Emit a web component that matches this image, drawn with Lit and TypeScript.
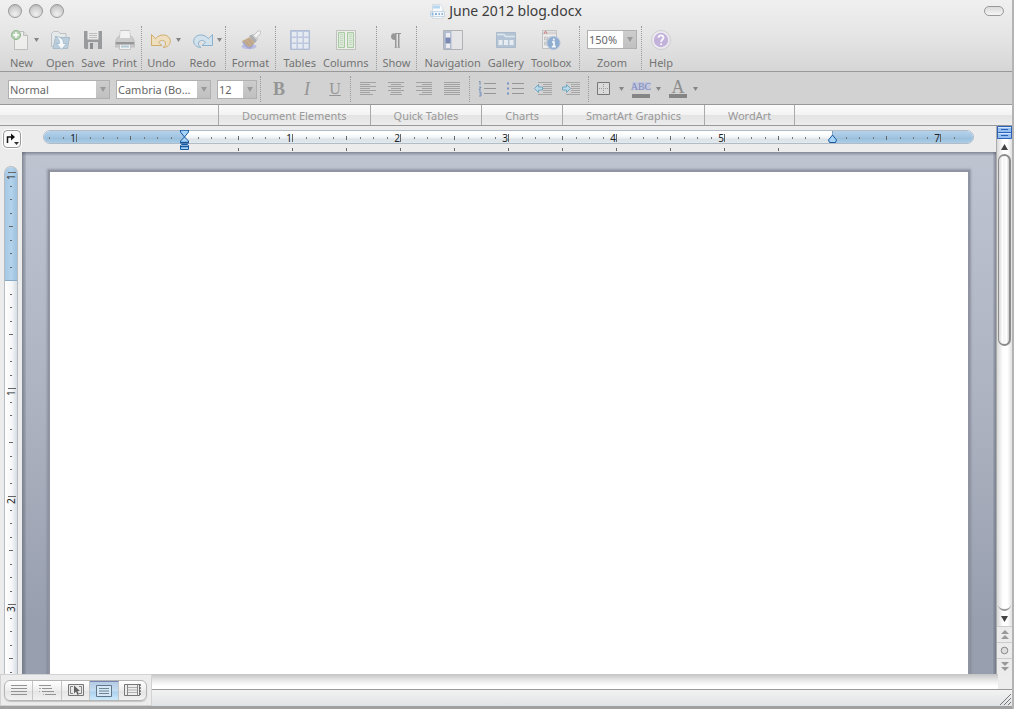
import { LitElement, html, svg, css } from "lit";
import { customElement, property } from "lit/decorators.js";

const INCH = 108;

const icons: Record<string, any> = {
  New: svg`<path d="M3.500 1.500h9l4 4v14h-13z" fill="#f1f2ef" stroke="#b4b7b2"/><path d="M12.500 1.500v4h4" fill="#ddd" stroke="#b4b7b2"/>
    <circle cx="5" cy="5" r="4.600" fill="#a9cda6" stroke="#7fae7e"/><path d="M5 2.300v5.400M2.300 5h5.400" stroke="#fff" stroke-width="1.800"/>`,
  Open: svg`<path d="M1.500 3.500l2-2h5l1.500 2h6v13h-14.500z" fill="#e6eaec" stroke="#b3bac0"/><path d="M3 18.500l2.500-11h14l-2 11z" fill="#b0c9dc" stroke="#9db3c3"/>
    <path d="M5 6.500c5 0 8.500 2 8.500 7h3l-5 6-5-6h3c0-3-1-6-4.500-7z" fill="#fbfdfe" stroke="#8fafc6" stroke-width=".8"/>`,
  Save: svg`<path d="M1 1h18v18h-17l-1-1z" fill="#87898b"/><path d="M4.500 1h11v8.500h-11z" fill="#ececec"/><path d="M6 3.500h8M6 5.500h8M6 7.500h8" stroke="#b5b5b5"/><path d="M5 12h10v7h-10z" fill="#d5d5d5"/><path d="M7 13h3v6h-3z" fill="#77797b"/>`,
  Print: svg`<path d="M5.500 .5h9l1 9h-11z" fill="#f4f4f4" stroke="#bbb"/><path d="M2 8l2-2h12l2 2 1.500 4v5h-19v-5z" fill="#c7c7c7" stroke="#aaa" stroke-width=".7"/><path d="M5.500 1h9l.5 7h-10z" fill="#f6f6f6"/><path d="M1 12h18v2.500h-18z" fill="#858585"/><path d="M4.500 14.500h11v5h-11z" fill="#f6f6f6" stroke="#aaa" stroke-width=".7"/><path d="M6 15.500h8v2h-8z" fill="#a5c4d2"/>`,
  Undo: svg`<path d="M.5 4.500v11h10.500l-3.500-3.200c2-2.700 6.500-2.500 7 .7.300 2-.8 3.500-2.500 4.500 4.500-.2 7.500-3 7.300-6.700C18.900 4.500 9.500 2.500 4.500 8.800z" fill="#f0dfb8" stroke="#cda04e"/>`,
  Redo: svg`<path d="M19.500 4.500v11h-10.500l3.500-3.200c-2-2.700-6.500-2.500-7 .7-.3 2 .8 3.500 2.500 4.500C3.500 17.300.5 14.500.7 10.800 1.100 4.500 10.500 2.500 15.500 8.800z" fill="#cfe2f0" stroke="#74a5c8"/>`,
  Format: svg`<ellipse cx="8" cy="16.500" rx="7.500" ry="2.800" fill="#b4b7e0"/><path d="M1 11l8-4 5 5.500-5 5.500c-3 0-6-3-8-7z" fill="#bea07a"/><path d="M2 12c2 4 4 5.500 7 6l3-2.500" stroke="#8f96d0" stroke-width="1.500" fill="none"/><path d="M4 10.500l5 6M7 9l5 6" stroke="#a08a70" stroke-width=".7"/><path d="M8 6l2.500-1.500 5.500 6-2 2.500z" fill="#a0a2a8"/><path d="M11 4.500l2 .5L17 1c2-1 3.500.8 2.500 2.500L16 7.500l.3 2z" fill="#f4f4f4" stroke="#aaa" stroke-width=".8"/>`,
  Tables: svg`<path d="M.5.500h19v19h-19z" fill="#b4c2de" stroke="#a4b4d2"/><path d="M2 2h4.500v4.500h-4.500zM8 2h4.500v4.500h-4.500zM14 2h4.500v4.500h-4.500zM2 8h4.500v4.500h-4.500zM8 8h4.500v4.500h-4.500zM14 8h4.500v4.500h-4.500zM2 14h4.500v4.500h-4.500zM8 14h4.500v4.500h-4.500zM14 14h4.500v4.500h-4.500z" fill="#e6ebf4"/>`,
  Columns: svg`<path d="M.5.500h19v19h-19z" fill="#eef1ec" stroke="#b5bab3"/><path d="M2.500 2.500h6v15h-6zM11.500 2.500h6v15h-6z" fill="#dcebd8" stroke="#9cc496"/><path d="M5.500 4v12M14.500 4v12" stroke="#bdd7b8" stroke-dasharray="1 1" stroke-width="3"/>`,
  Show: svg`<path d="M9 3c-2.800 0-4 1.600-4 3.500s1.200 3.500 4 3.500zM9 3h1.500v14.500h-1.500zM12 3h1.500v14.500h-1.500zM8.500 3h6.500v1h-6.500zM8.500 17h2.500v.8h-2.500zM11.500 17h2.500v.8h-2.500z" fill="#858585"/>`,
  Navigation: svg`<path d="M.5.500h19v19h-19z" fill="#e6e6e8" stroke="#a4a6ab"/><path d="M1 1h7.500v18h-7.500z" fill="#a9b3cf"/><path d="M3 3h4v4h-4zM3 14h4v4h-4z" fill="#eef0f6"/><path d="M2.500 8h5v5h-5z" fill="#6373a4"/>`,
  Gallery: svg`<path d="M.5 2.500h19v15h-19z" fill="#a8bdd3" stroke="#9db1c5"/><path d="M1 4.500h7l1.500 2h9.500" stroke="#dce6ef" fill="none" stroke-width="1.500"/><path d="M2.500 10h4v5h-4zM8 10h4v5h-4zM13.500 10h4v5h-4z" fill="#e8eff5"/>`,
  Toolbox: svg`<path d="M1.500 .5h14v18h-14z" fill="#f0f0f0" stroke="#b9b9b9"/><path d="M2 1.500h13v3h-13z" fill="#d5d0d0"/><path d="M3 4l1.500-3L6 4" stroke="#c66" fill="none"/><path d="M3.500 7h3v3h-3zM8 7h3v3h-3zM3.500 12h3v3h-3zM12 7h2v3h-2z" fill="#d5d5d5" stroke="#aaa" stroke-width=".6"/><circle cx="12.500" cy="13" r="6.500" fill="#7ba1ce" stroke="#a7bcd5"/><path d="M12.800 8.500v2M11 12h2v4.500M10.800 16.700h4" stroke="#fff" stroke-width="1.700" fill="none"/>`,
  Help: svg`<circle cx="10" cy="10" r="9.500" fill="#f0edf3" stroke="#c9c6cc"/><circle cx="10" cy="10" r="7.200" fill="#bba6d9"/><path d="M7.500 7.800c.2-3.400 5.300-3.200 5 .1-.2 1.700-2.300 1.700-2.400 4M10.100 13.200v1.800" fill="none" stroke="#fff" stroke-width="1.800"/>`,
};

const rows = (spans: number[][]) =>
  spans.map(([a, b], i) => svg`<path d="M${a} ${2.5 + i * 2}H${b}" stroke="#a2a2a2"/>`);
const listRows = [3.5, 8.5, 13.5].map((y) => svg`<path d="M6 ${y}h12" stroke="#959595"/>`);
const indentRows = svg`<path d="M4 2.500h14M9 4.500h9M9 6.500h9M9 8.500h9M9 10.500h9M9 12.500h9M4 14.500h14" stroke="#a6a6a6"/>`;

const formatIcons: Record<string, any> = {
  "Align left": rows([[1, 17], [1, 11], [1, 17], [1, 11], [1, 17], [1, 11], [1, 14]]),
  "Align center": rows([[1, 17], [4, 14], [1, 17], [4, 14], [1, 17], [4, 14], [3, 15]]),
  "Align right": rows([[1, 17], [7, 17], [1, 17], [7, 17], [1, 17], [7, 17], [4, 17]]),
  Justify: rows([[1, 17], [1, 17], [1, 17], [1, 17], [1, 17], [1, 17], [1, 17]]),
  "Numbered list": svg`${listRows}<path d="M1 2l1-1v4M1 7h2l-2 3h2M1 12h2v4h-2M1.500 14h1" stroke="#6688b8" fill="none" stroke-width=".9"/>`,
  "Bulleted list": svg`${listRows}<path d="M1 2.500h2v2h-2zM1 7.500h2v2h-2zM1 12.500h2v2h-2z" fill="#7795c4"/>`,
  "Decrease indent": svg`${indentRows}<path d="M.5 8.500l4-4v2.500h4v3h-4v2.500z" fill="#b9dbea" stroke="#6ba3be" stroke-width=".9"/>`,
  "Increase indent": svg`${indentRows}<path d="M8.500 8.500l-4-4v2.500h-4v3h4v2.500z" fill="#b9dbea" stroke="#6ba3be" stroke-width=".9"/>`,
  Borders: svg`<path d="M2.500 2.500h12v12h-12z" fill="#dadada" stroke="#777"/><path d="M8.500 4v10M4 8.500h10" stroke="#999" stroke-dasharray="1 1"/>`,
};

const viewIcons: Record<string, any> = {
  "Draft view": svg`<path d="M1 2.500h16M1 5.500h16M1 8.500h16M1 11.500h16" stroke="#929292"/>`,
  "Outline view": svg`<path d="M1 2.500h12M4 5.500h10M4 8.500h12M7 11.500h11" stroke="#929292"/><path d="M1 5.500h2M1 8.500h1M5 11.500h1" stroke="#aaa"/>`,
  "Publishing view": svg`<path d="M1.500 1.500h15v11h-15z" fill="#e8e8e8" stroke="#777"/><path d="M6 3.500h-2.500v7h2.500M12 3.500h2.500v7h-2.500" fill="none" stroke="#888"/><path d="M7 2.500v8l2-2 1.500 3.500 1.500-.7-1.500-3.300h2.500z" fill="#606060"/>`,
  "Print layout view": svg`<path d="M1.500 1.500h15v11h-15z" fill="#d6e8f5" stroke="#60778a"/><path d="M4 4.500h10M4 7h10M4 9.500h10" stroke="#6b8496"/>`,
  "Notebook view": svg`<path d="M1.500 1.500h15v11h-15z" fill="#eee" stroke="#777"/><path d="M4.500 2v10M14.500 2v10" stroke="#888"/><path d="M5 4.500h9M5 7h9M5 9.500h9" stroke="#b0b0b0"/><path d="M17 1v12" stroke="#666" stroke-width="1.500" stroke-dasharray="2 1"/>`,
};

type Item = { label: string; menu?: boolean };
const groups: Item[][] = [
  [{ label: "New", menu: true }, { label: "Open" }, { label: "Save" }, { label: "Print" }],
  [{ label: "Undo", menu: true }, { label: "Redo", menu: true }],
  [{ label: "Format" }],
  [{ label: "Tables" }, { label: "Columns" }],
  [{ label: "Show" }],
  [{ label: "Navigation" }, { label: "Gallery" }, { label: "Toolbox" }],
];

@customElement("combo-box")
export class ComboBox extends LitElement {
  @property() label = "";
  @property() value = "";
  static styles = css`
    :host { display: flex; position: relative; height: 19px; }
    select {
      flex: 1; min-width: 0; height: 19px; padding: 0 14px 0 1px; margin: 0;
      appearance: none; border: 1px solid #b0b0b0; border-radius: 0;
      background: linear-gradient(#cdcdcd, #c0c0c0) right / 13px 100% no-repeat, #fff;
      color: #666; font: 11px "Noto Sans", "Open Sans", sans-serif; text-overflow: clip;
    }
    .arrow { position: absolute; right: 4px; top: 7px; pointer-events: none; }
  `;
  render() {
    return html`<select aria-label=${this.label}><option>${this.value}</option></select>
      <svg class="arrow" width="6" height="5" aria-hidden="true"><path d="M0 0h6l-3 5z" fill="#9a9a9a" /></svg>`;
  }
}

@customElement("page-ruler")
export class PageRuler extends LitElement {
  @property({ type: Boolean, reflect: true }) vertical = false;
  static styles = css`
    :host { display: block; }
    svg { display: block; overflow: hidden; }
    text { font: 10px "Noto Sans", "Open Sans", sans-serif; fill: #222; }
    .track {
      display: flex; height: 14px; box-sizing: border-box; overflow: hidden;
      border: 1px solid #b2bcc6; border-radius: 7px;
      background: linear-gradient(#fff 20%, #f3f6f8 50%, #dbe3e8 70%, #e3eaee);
    }
    .margin { flex: none; width: 140px; background: linear-gradient(#b5d1ea, #a2c6e3 50%, #9abfdc 60%, #abcde8); }
    .text { flex: none; width: 648px; }
    .rest { flex: 1; width: auto; border-left: 1px solid #7f9fbd; }
    .overlay { position: relative; height: 24px; }
    .marks { position: absolute; inset: 0; width: 100%; height: 24px; }
    .v {
      position: relative; box-sizing: border-box; width: 14px; height: 100%; overflow: hidden;
      border: 1px solid #b6bcc1; border-bottom: 0; border-radius: 7px 7px 0 0;
      background: linear-gradient(90deg, #fff, #f4f5f7 60%, #d5dee4);
    }
    .vmargin { height: 113px; border-bottom: 1px solid #8aa9c5; background: linear-gradient(90deg, #a4c7e4, #b4d3ec 50%, #9cc1de); }
    .vmarks { position: absolute; inset: 0; width: 100%; height: 100%; }
  `;
  render() {
    return this.vertical ? this.renderVertical() : this.renderHorizontal();
  }
  private renderHorizontal() {
    const zero = 141;
    const marks = [];
    for (let i = -10; i < 58; i++) {
      const x = Math.round(zero + (i * INCH) / 8);
      const inch = i % 8 === 0;
      const half = i % 4 === 0;
      if (i !== 0 && i !== 48) {
        marks.push(inch
          ? svg`<path d="M${x + 0.5} 4v8" stroke="#666"/><text x=${x} y="12" text-anchor="end">${Math.abs(i / 8)}</text>`
          : half
            ? svg`<path d="M${x + 0.5} 6v4" stroke="#666"/>`
            : svg`<path d="M${x + 0.5} 7v2" stroke="#777"/>`);
      }
      if (half && i > 0 && i < 48) marks.push(svg`<path d="M${x + 0.5} 18v3" stroke="#666"/>`);
    }
    return html`<div class="overlay">
      <div class="track"><div class="margin"></div><div class="text"></div><div class="margin rest"></div></div>
      <svg class="marks" aria-hidden="true">
        ${marks}
        <g stroke="#17589e" fill="#a6d3f7">
          <path d="M137.500 -.5h8v2.500l-4 5-4-5z" /><path d="M141.500 7l4 4v2h-8v-2z" /><path d="M138.500 14.500h6l1 1v4h-8v-4z" />
          <path d="M789.500 5l4 5-1 2.500h-6l-1-2.500z" />
        </g>
        <path d="M137 0h9M137 12.500h9M137 16.500h9" stroke="#17589e" stroke-width="1.500" />
      </svg>
    </div>`;
  }
  private renderVertical() {
    const zero = 114;
    const marks = [];
    for (let i = -8; i < 30; i++) {
      const y = Math.round(zero + (i * INCH) / 8);
      if (i === 0) continue;
      marks.push(i % 8 === 0
        ? svg`<path d="M3 ${y - 0.5}h8" stroke="#666"/><text transform="translate(10 ${y + 7}) rotate(-90)">${Math.abs(i / 8)}</text>`
        : i % 4 === 0
          ? svg`<path d="M4 ${y - 0.5}h4" stroke="#666"/>`
          : svg`<path d="M5 ${y - 0.5}h2" stroke="#666"/>`);
    }
    return html`<div class="v"><div class="vmargin"></div><svg class="vmarks" aria-hidden="true">${marks}</svg></div>`;
  }
}

@customElement("app-root")
export class AppRoot extends LitElement {
  static styles = css`
    :host {
      display: flex; height: 100vh; overflow: hidden; box-sizing: border-box; padding-right: 2px;
      background: #b4b4b4; font: 11px "Noto Sans", "Open Sans", sans-serif; color: #737373;
    }
    * { box-sizing: border-box; }
    button { padding: 0; margin: 0; border: 0; background: none; font: inherit; color: inherit; }
    svg { display: block; }
    .window { flex: 1; min-width: 0; display: flex; flex-direction: column; background: #ececec; }
    .head { height: 72px; flex: none; background: linear-gradient(#f0f0f0, #e5e5e5 50%, #d6d6d6); border-bottom: 1px solid #989898; }
    .title { display: grid; grid-template-columns: 1fr auto 1fr; align-items: center; height: 22px; padding: 0 8px; }
    .lights { display: flex; gap: 7px; }
    .light { width: 14px; height: 14px; border-radius: 50%; border: 1px solid #999; background: radial-gradient(circle at 50% 75%, #f0f0f0, #cfcfcf 60%, #a8a8a8); }
    .name { display: flex; align-items: center; gap: 4px; margin: 0; font-size: 14px; line-height: 20px; font-weight: 400; color: #3c3c3c; }
    .pill { justify-self: end; width: 20px; height: 10px; border: 1px solid #999; border-radius: 5px; background: linear-gradient(#dadada, #f5f5f5); }
    .tools { display: grid; grid-template-columns: 142px 84px 50px 101px 40px 163px 62px 38px; height: 48px; padding-top: 4px; }
    .group { display: flex; justify-content: center; gap: 7px; height: 44px; border-right: 1px dotted #999; }
    .group:first-child { padding-left: 6px; }
    .group:nth-child(2) { padding-left: 2px; gap: 8px; }
    .group:last-child { border-right: 0; }
    .tool { display: flex; flex-direction: column; align-items: center; gap: 5px; line-height: 16px; padding-top: 4px; }
    .tool svg { opacity: .8; }
    .entry { display: flex; gap: 1px; align-items: flex-start; }
    .menu { padding-top: 12px; }
    .caret { width: 5px; flex: none; }
    .zoom { display: flex; flex-direction: column; align-items: center; gap: 6px; padding: 4px 0 0 3px; line-height: 16px; }
    .zoombox { width: 50px; }
    .format { display: flex; align-items: center; flex: none; height: 33px; padding: 2px 0 0 8px; background: #d2d2d2; border-bottom: 1px solid #989898; }
    .boxes { display: flex; gap: 6px; }
    .style { width: 102px; } .font { width: 95px; } .size { width: 40px; }
    .set { display: flex; align-items: center; gap: 10px; height: 26px; padding: 0 8px; border-left: 1px dotted #999; }
    .set.first { margin-left: 3px; padding-right: 5px; gap: 8px; }
    .glyph { width: 20px; font: 18px/20px "Liberation Serif", serif; color: #959595; }
    .b { font-weight: 700; } .i { font-style: italic; } .u { font-size: 16px; text-decoration: underline; }
    .menuicon { display: flex; align-items: center; gap: 6px; }
    .ink { display: flex; flex-direction: column; align-items: center; width: 18px; height: 18px; font: 18px/14px "Liberation Serif", serif; color: #8d8d8d; border-bottom: 4px solid #858585; }
    .ink.abc { font: 10px/13px "Liberation Serif", serif; color: #7d88be; background: linear-gradient(transparent 15%, #c3c7dd 15% 75%, transparent 75%); }
    .set.last { padding-left: 6px; gap: 8px; }
    .tabs { display: flex; flex: none; height: 21px; padding-left: 218px; background: linear-gradient(#fbfbfb, #f3f3f3 48%, #e4e4e4 52%, #ececec); border-bottom: 1px solid #999; }
    .tab { padding: 0 23px; border-right: 1px solid #aaa; color: #999; line-height: 22px; }
    .tab:first-child { border-left: 1px solid #aaa; }
    .work { flex: 1; min-height: 0; display: grid; grid-template-columns: 22px 1fr 16px; grid-template-rows: 26px 1fr; }
    .corner { padding: 4px 0 0 3px; }
    .tabstop { display: block; width: 18px; height: 18px; border: 1px solid #999; border-radius: 4px; background: #fafafa; box-shadow: 0 0 0 1px #fff; }
    .hruler { padding: 4px 22px 0 21px; overflow: hidden; }
    .vruler { padding: 14px 0 0 4px; overflow: hidden; }
    .desk {
      padding: 18px 26px 0 26px; overflow: hidden;
      background:
        linear-gradient(rgba(90, 95, 110, .6), transparent) top / 100% 4px no-repeat,
        linear-gradient(90deg, rgba(90, 98, 110, .6), rgba(90, 98, 110, .15)) left / 4px 100% no-repeat,
        linear-gradient(270deg, rgba(90, 98, 110, .6), rgba(90, 98, 110, .15)) right / 3px 100% no-repeat,
        linear-gradient(#bfc4d1, #acb2c0 50%, #989fae 90%);
    }
    .page { height: 100%; background: #fff; border: 2px solid #8f94a0; border-bottom: 0; box-shadow: 0 0 2px 1px rgba(110, 115, 130, .5); }
    .scroll { grid-column: 3; grid-row: 1 / 3; display: flex; flex-direction: column; align-items: center; background: linear-gradient(90deg, #d8d8d8, #fff 40%, #fff 70%, #e0e0e0); border-left: 1px solid #aaa; }
    .split { width: 100%; height: 13px; flex: none; background: #95bff3; }
    .arrow { height: 15px; width: 15px; display: grid; place-items: center; flex: none; }
    .thumb { width: 13px; height: 192px; flex: none; border: 2px solid #8c8c8c; border-left-width: 1px; border-radius: 7px; background: linear-gradient(90deg, #d6d6d6, #fff 35%, #f3f3f3 50%, #fff 75%, #ccc); }
    .groove { flex: 1; width: 13px; border-bottom: 2px solid #999; border-radius: 0 0 7px 7px; }
    .browse { display: grid; place-items: center; flex: none; width: 100%; height: 16px; background: #ebebeb; border-top: 1px solid #ccc; }
    .foot { display: flex; flex: none; height: 35px; border-bottom: 3px solid #a0a0a0; }
    .views { display: flex; flex: none; align-items: center; width: 152px; padding: 0 3px; border: 1px solid #d2d2d2; background: #ececec; }
    .seg { display: flex; width: 143px; height: 21px; border: 1px solid #b4b4b4; border-radius: 6px; overflow: hidden; background: linear-gradient(#fff, #ededed 50%, #e5e5e5 55%, #f2f2f2); box-shadow: 0 1px 1px #c4c4c4; }
    .view { flex: 1; display: grid; place-items: center; border-right: 1px solid #c4c4c4; }
    .view:last-child { border-right: 0; }
    .view.on { background: linear-gradient(#b4cbe4, #c5ddf1 50%, #a9d1ef 55%, #cdeafa); border-top: 1px solid #7686b5; }
    .status { flex: 1; display: flex; flex-direction: column; }
    .hbar { height: 15px; margin-right: 14px; background: linear-gradient(#c4c4c4, #eee 50%, #fff 80%); }
    .info { flex: 1; display: flex; justify-content: flex-end; align-items: flex-end; border-top: 1px solid #999; background: linear-gradient(#f2f2f2, #e0e3e6); }
  `;

  private caret() {
    return html`<svg class="caret" width="5" height="4" viewBox="0 0 5 4" aria-hidden="true"><path d="M0 0h5l-2.500 4z" fill="#858585" /></svg>`;
  }
  private tool(item: Item) {
    return html`<span class="entry">
      <button class="tool"><svg width="20" height="20" viewBox="0 0 20 20" aria-hidden="true">${icons[item.label]}</svg>${item.label}</button>
      ${item.menu ? html`<button class="menu" aria-label="${item.label} options">${this.caret()}</button>` : ""}
    </span>`;
  }
  private icon(name: string) {
    return html`<button aria-label=${name}><svg width="18" height="18" viewBox="0 0 18 18" aria-hidden="true">${formatIcons[name]}</svg></button>`;
  }

  render() {
    return html`<div class="window">
      <header class="head">
        <div class="title">
          <div class="lights">
            <button class="light" aria-label="Close"></button><button class="light" aria-label="Minimize"></button><button class="light" aria-label="Zoom window"></button>
          </div>
          <h1 class="name">
            <svg width="15" height="15" viewBox="0 0 15 15" aria-hidden="true"><path d="M2.500 .5h8l2.500 3v11h-10.500z" fill="#f7fafc" stroke="#d5dade" /><path d="M3 1.500h7v3h-7z" fill="#b5d8f0" /><path d="M.5 7.500h14v5h-14z" fill="#f1f7fb" stroke="#c6d6e3" /><path d="M2.500 8.500v3M5 10h2M8.500 10h1.500M11.500 10h1.500" stroke="#8db4d6" stroke-width="1.800" /></svg>
            June 2012 blog.docx
          </h1>
          <button class="pill" aria-label="Toggle toolbar"></button>
        </div>
        <nav class="tools">
          ${groups.map((g) => html`<div class="group">${g.map((i) => this.tool(i))}</div>`)}
          <div class="group"><div class="zoom"><combo-box class="zoombox" label="Zoom" value="150%"></combo-box><span>Zoom</span></div></div>
          <div class="group">${this.tool({ label: "Help" })}</div>
        </nav>
      </header>
      <div class="format">
        <div class="boxes">
          <combo-box class="style" label="Style" value="Normal"></combo-box>
          <combo-box class="font" label="Font" value="Cambria (Bo…"></combo-box>
          <combo-box class="size" label="Font size" value="12"></combo-box>
        </div>
        <div class="set first">
          <button class="glyph b">B</button><button class="glyph i">I</button><button class="glyph u">U</button>
        </div>
        <div class="set">${["Align left", "Align center", "Align right", "Justify"].map((n) => this.icon(n))}</div>
        <div class="set">${["Numbered list", "Bulleted list", "Decrease indent", "Increase indent"].map((n) => this.icon(n))}</div>
        <div class="set last">
          <span class="menuicon">${this.icon("Borders")}${this.caret()}</span>
          <span class="menuicon"><button class="ink abc">ABC</button>${this.caret()}</span>
          <span class="menuicon"><button class="ink">A</button>${this.caret()}</span>
        </div>
      </div>
      <nav class="tabs">
        ${["Document Elements", "Quick Tables", "Charts", "SmartArt Graphics", "WordArt"].map((t) => html`<button class="tab">${t}</button>`)}
      </nav>
      <main class="work">
        <div class="corner"><button class="tabstop" aria-label="Tab stop"><svg width="16" height="16" aria-hidden="true"><path d="M3.500 12v-6h5" fill="none" stroke="#111" stroke-width="1.500" /><path d="M7 2.500l4 3.500-4 3.500z" fill="#111" /><path d="M10 11h5l-2.500 3z" fill="#333" /></svg></button></div>
        <page-ruler class="hruler"></page-ruler>
        <div class="scroll">
          <button class="split" aria-label="Split window"><svg width="15" height="13" aria-hidden="true"><path d="M.5 .5h14v12h-14zM0 6.500h15" fill="none" stroke="#2e62b4" /><path d="M4 3.500h7M4 9.500h7" stroke="#2e62b4" /><path d="M1 1.500h13M1 7.500h13" stroke="#d5e8fd" /></svg></button>
          <button class="arrow" aria-label="Scroll up"><svg width="7" height="6"><path d="M3.500 0l3.500 6h-7z" fill="#444" /></svg></button>
          <div class="thumb"></div><div class="groove"></div>
          <button class="arrow" aria-label="Scroll down"><svg width="7" height="6"><path d="M3.500 6l3.500-6h-7z" fill="#444" /></svg></button>
          <button class="browse" aria-label="Previous page"><svg width="8" height="9"><path d="M4 0l4 4h-8zM4 5l4 4h-8z" fill="#999" /></svg></button>
          <button class="browse" aria-label="Browse object"><svg width="9" height="9"><circle cx="4.500" cy="4.500" r="3.300" fill="#ddd" stroke="#888" /></svg></button>
          <button class="browse" aria-label="Next page"><svg width="8" height="9"><path d="M4 4l4-4h-8zM4 9l4-4h-8z" fill="#999" /></svg></button>
        </div>
        <page-ruler class="vruler" vertical></page-ruler>
        <div class="desk"><div class="page"></div></div>
      </main>
      <footer class="foot">
        <div class="views"><div class="seg">
          ${Object.entries(viewIcons).map(([n, i]) => html`<button class="view ${n === "Print layout view" ? "on" : ""}" aria-label=${n}><svg width="18" height="14" viewBox="0 0 18 14" aria-hidden="true">${i}</svg></button>`)}
        </div></div>
        <div class="status"><div class="hbar"></div><div class="info"><svg width="13" height="13" aria-hidden="true"><path d="M1 12l11-11M5 12l7-7M9 12l3-3" stroke="#777" /></svg></div></div>
      </footer>
    </div>`;
  }
}
